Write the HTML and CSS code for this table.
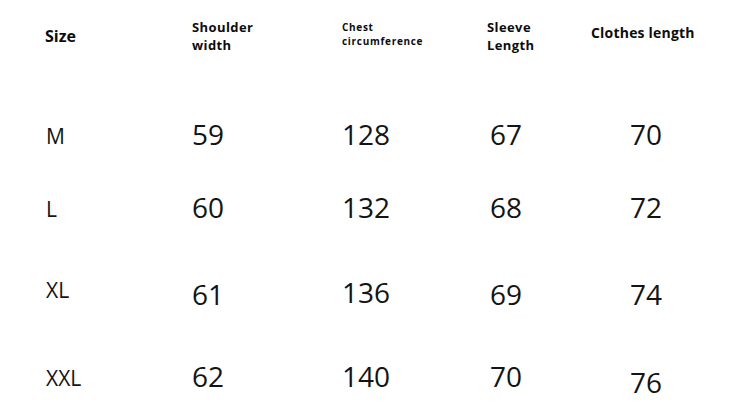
FILE: index.html
```html
<!DOCTYPE html>
<html lang="en">
<head>
<meta charset="utf-8">
<title>Size chart</title>
<link rel="stylesheet" href="styles.css">
</head>
<body>
<div class="chart">
  <div class="head h-size">Size</div>
  <div class="head h-shoulder">Shoulder<br>width</div>
  <div class="head h-chest">Chest<br>circumference</div>
  <div class="head h-sleeve">Sleeve<br>Length</div>
  <div class="head h-length">Clothes length</div>

  <div class="size">M</div>
  <div class="num">59</div>
  <div class="num">128</div>
  <div class="num sleeve">67</div>
  <div class="num last">70</div>

  <div class="size">L</div>
  <div class="num">60</div>
  <div class="num">132</div>
  <div class="num sleeve">68</div>
  <div class="num last">72</div>

  <div class="size up">XL</div>
  <div class="num">61</div>
  <div class="num up-s">136</div>
  <div class="num sleeve">69</div>
  <div class="num last">74</div>

  <div class="size">XXL</div>
  <div class="num">62</div>
  <div class="num">140</div>
  <div class="num sleeve">70</div>
  <div class="num last down">76</div>
</div>
</body>
</html>
```

FILE: styles.css
```css
html, body {
  margin: 0;
  padding: 0;
  background: #ffffff;
}

body {
  width: 736px;
  height: 409px;
  overflow: hidden;
  font-family: "Open Sans", "Noto Sans", sans-serif;
  color: #141414;
}

.chart {
  display: grid;
  grid-template-columns: 147px 150px 145px 104px 1fr;
  grid-template-rows: 72px 76px 73px 87px 82px;
  padding-left: 45px;
}

.head {
  align-self: center;
  font-weight: 700;
  color: #0d0d0d;
}

.h-size {
  font-size: 16px;
  line-height: 20px;
}

.h-shoulder,
.h-sleeve {
  font-size: 13px;
  line-height: 18px;
  letter-spacing: 0.4px;
}

.h-chest {
  font-size: 10px;
  line-height: 14px;
  letter-spacing: 0.7px;
  margin-bottom: 4px;
}

.h-length {
  font-size: 14px;
  line-height: 18px;
  letter-spacing: 0.2px;
  margin-bottom: 6px;
}

.size {
  align-self: end;
  font-size: 21px;
  line-height: 24px;
  padding-left: 1px;
}

.num {
  align-self: end;
  font-size: 28px;
  line-height: 28px;
}

.sleeve {
  padding-left: 3px;
}

.last {
  padding-left: 39px;
}

.up {
  margin-bottom: 6px;
}

.up-s {
  margin-bottom: 2px;
}

.down {
  margin-bottom: -6px;
}
```
